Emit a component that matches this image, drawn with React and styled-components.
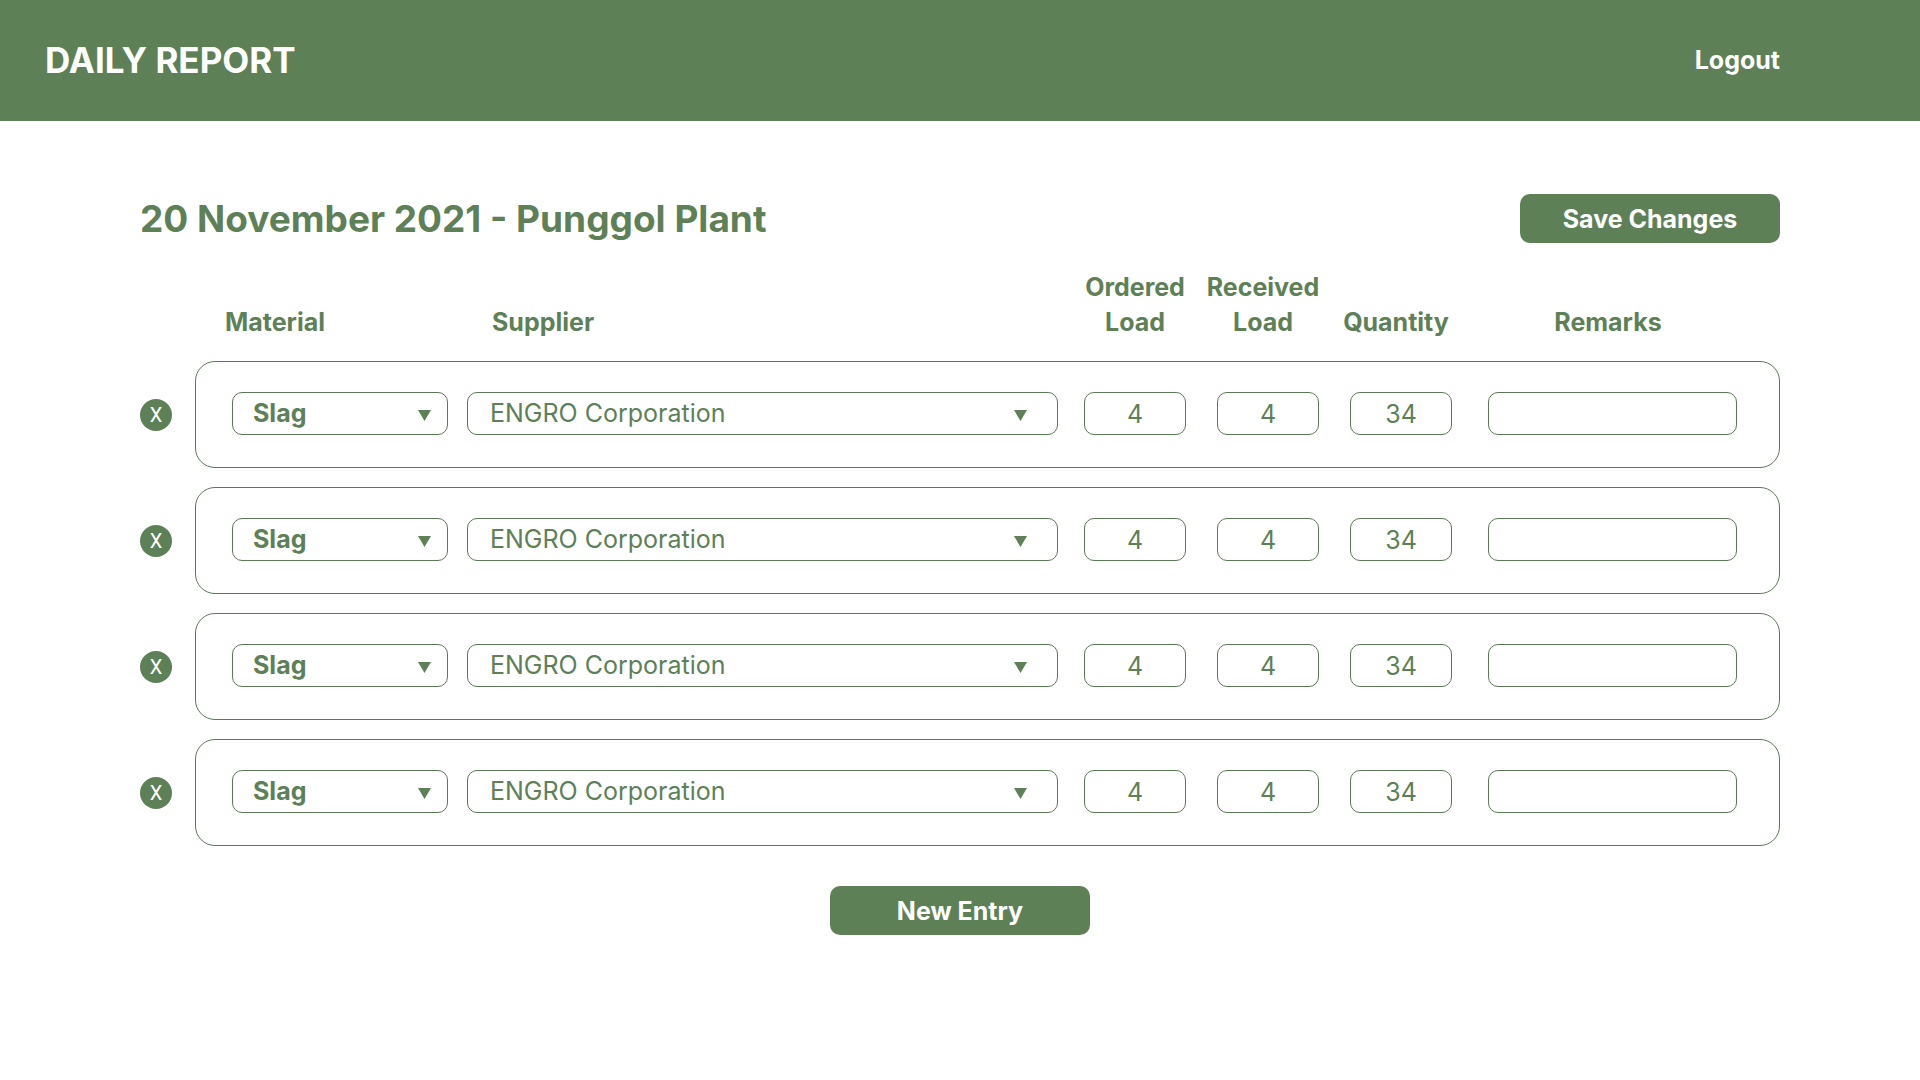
import React, { useState } from "react";
import styled, { createGlobalStyle } from "styled-components";

const green = "#5e8057";
const outline = "#5b7857";

const GlobalStyle = createGlobalStyle`
  *, *::before, *::after { box-sizing: border-box; }
  body {
    margin: 0;
    background: #fff;
    color: ${green};
    font-family: Inter, "Open Sans", sans-serif;
    font-size: 25px;
    line-height: 35px;
  }
  button, input, select { font: inherit; color: inherit; }
`;

const TopBar = styled.header`
  display: flex;
  align-items: center;
  justify-content: space-between;
  min-height: 121px;
  padding: 0 140px 0 45px;
  background: ${green};
  color: #fff;
`;

const AppTitle = styled.h1`
  margin: 0;
  font-size: 35px;
  font-weight: 700;
`;

const LogoutLink = styled.a`
  color: inherit;
  font-weight: 700;
  text-decoration: none;
`;

const Main = styled.main`
  padding: 73px 140px 40px;
`;

const TitleRow = styled.div`
  display: flex;
  align-items: center;
  justify-content: space-between;
`;

const ReportTitle = styled.h2`
  margin: 0;
  font-size: 37px;
  font-weight: 700;
`;

const ActionButton = styled.button`
  width: 260px;
  height: 49px;
  padding: 1px 0 0;
  border: 0;
  border-radius: 10px;
  background: ${green};
  color: #fff;
  font-weight: 700;
  cursor: pointer;
`;

const ColumnHeads = styled.div`
  display: flex;
  align-items: flex-end;
  margin: 27px 0 21px;
  padding: 0 43px 0 85px;
  font-weight: 700;
`;

const ColumnHead = styled.div`
  flex: ${(p) => (p.$width ? `0 0 ${p.$width}px` : "1 1 0")};
  margin-left: ${(p) => p.$gap || 0}px;
  text-align: ${(p) => (p.$center ? "center" : "left")};
`;

const Entries = styled.ul`
  display: grid;
  gap: 19px;
  margin: 0;
  padding: 0;
  list-style: none;
`;

const Entry = styled.li`
  display: flex;
  align-items: center;
  gap: 23px;
`;

const RemoveButton = styled.button`
  flex: none;
  width: 32px;
  height: 32px;
  padding: 0;
  border: 0;
  border-radius: 50%;
  background: ${green};
  color: #fff;
  font-family: Roboto, sans-serif;
  font-size: 20px;
  line-height: 32px;
  cursor: pointer;
`;

const Card = styled.div`
  display: flex;
  flex: 1;
  min-width: 0;
  padding: 30px 42px 32px 36px;
  border: 1px solid ${outline};
  border-radius: 20px;
`;

const Field = styled.div`
  position: relative;
  flex: ${(p) => (p.$width ? `0 0 ${p.$width}px` : "1 1 0")};
  min-width: 0;
  margin-left: ${(p) => p.$gap || 0}px;
`;

const Select = styled.select`
  display: block;
  width: 100%;
  height: 43px;
  padding: 0 48px 0 ${(p) => (p.$strong ? 20 : 22)}px;
  border: 1px solid ${outline};
  border-radius: 10px;
  background: transparent;
  font-weight: ${(p) => (p.$strong ? 700 : 400)};
  appearance: none;
`;

const Arrow = styled.svg`
  position: absolute;
  top: 18px;
  right: ${(p) => p.$inset}px;
  width: 13px;
  height: 11px;
  fill: ${green};
  pointer-events: none;
`;

const TextInput = styled.input`
  display: block;
  width: 100%;
  height: 43px;
  padding: 0 12px;
  border: 1px solid ${outline};
  border-radius: 10px;
  background: transparent;
  text-align: ${(p) => (p.$center ? "center" : "left")};
`;

const Footer = styled.div`
  display: flex;
  justify-content: center;
  margin-top: 40px;
`;

function Dropdown({ labelId, value, strong, inset }) {
  return (
    <>
      <Select aria-labelledby={labelId} defaultValue={value} $strong={strong}>
        <option>{value}</option>
      </Select>
      <Arrow viewBox="0 0 13 11" $inset={inset} aria-hidden="true">
        <path d="M0 0H13L6.5 11Z" />
      </Arrow>
    </>
  );
}

const blank = {
  material: "Slag",
  supplier: "ENGRO Corporation",
  ordered: "4",
  received: "4",
  quantity: "34",
  remarks: "",
};

export default function App() {
  const [entries, setEntries] = useState([1, 2, 3, 4].map((id) => ({ id, ...blank })));

  const remove = (id) => setEntries((list) => list.filter((e) => e.id !== id));
  const add = () =>
    setEntries((list) => [...list, { id: Math.max(0, ...list.map((e) => e.id)) + 1, ...blank }]);

  return (
    <>
      <GlobalStyle />
      <TopBar>
        <AppTitle>DAILY REPORT</AppTitle>
        <LogoutLink href="#logout">Logout</LogoutLink>
      </TopBar>
      <Main>
        <TitleRow>
          <ReportTitle>20 November 2021 - Punggol Plant</ReportTitle>
          <ActionButton type="button">Save Changes</ActionButton>
        </TitleRow>

        <ColumnHeads>
          <ColumnHead id="material" $width={267}>Material</ColumnHead>
          <ColumnHead id="supplier">Supplier</ColumnHead>
          <ColumnHead id="ordered" $width={102} $center>Ordered<br />Load</ColumnHead>
          <ColumnHead id="received" $width={114} $gap={20} $center>Received<br />Load</ColumnHead>
          <ColumnHead id="quantity" $width={112} $gap={20} $center>Quantity</ColumnHead>
          <ColumnHead id="remarks" $width={258} $gap={27} $center>Remarks</ColumnHead>
        </ColumnHeads>

        <Entries>
          {entries.map((e) => (
            <Entry key={e.id}>
              <RemoveButton type="button" aria-label="X" onClick={() => remove(e.id)}>X</RemoveButton>
              <Card>
                <Field $width={216}>
                  <Dropdown labelId="material" value={e.material} strong inset={17} />
                </Field>
                <Field $gap={19}>
                  <Dropdown labelId="supplier" value={e.supplier} inset={31} />
                </Field>
                <Field $width={102} $gap={26}>
                  <TextInput aria-labelledby="ordered" defaultValue={e.ordered} $center />
                </Field>
                <Field $width={102} $gap={31}>
                  <TextInput aria-labelledby="received" defaultValue={e.received} $center />
                </Field>
                <Field $width={102} $gap={31}>
                  <TextInput aria-labelledby="quantity" defaultValue={e.quantity} $center />
                </Field>
                <Field $width={249} $gap={36}>
                  <TextInput aria-labelledby="remarks" defaultValue={e.remarks} />
                </Field>
              </Card>
            </Entry>
          ))}
        </Entries>

        <Footer>
          <ActionButton type="button" onClick={add}>New Entry</ActionButton>
        </Footer>
      </Main>
    </>
  );
}
